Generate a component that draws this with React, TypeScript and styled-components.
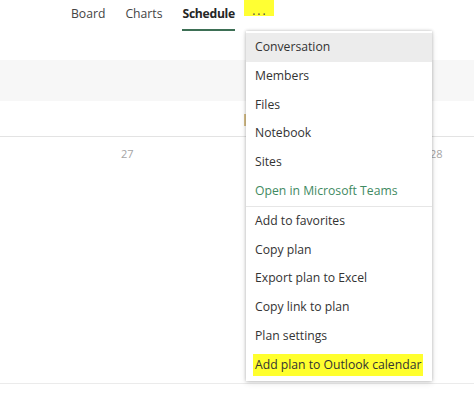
import React from 'react';
import styled, { createGlobalStyle } from 'styled-components';

const GlobalStyle = createGlobalStyle`
  html, body {
    margin: 0;
    padding: 0;
    background: #ffffff;
  }
  body {
    font-family: 'Open Sans', 'Noto Sans', sans-serif;
  }
`;

const Page = styled.div`
  position: relative;
  width: 474px;
  height: 393px;
  overflow: hidden;
  background: #ffffff;
  color: #333333;
`;

const TabBar = styled.nav`
  display: flex;
  align-items: flex-start;
  height: 32px;
  padding-left: 71px;
  gap: 20px;
`;

const Tab = styled.div<{ $active?: boolean }>`
  height: 29px;
  line-height: 28px;
  font-size: 12.2px;
  font-weight: ${(p) => (p.$active ? 700 : 400)};
  color: ${(p) => (p.$active ? '#252525' : '#444444')};
  border-bottom: 2px solid ${(p) => (p.$active ? '#3d6f55' : 'transparent')};
  letter-spacing: ${(p) => (p.$active ? '-0.3px' : '0')};
`;

const More = styled.div`
  margin-left: -11px;
  height: 16px;
  width: 30px;
  background: #ffff33;
  color: #444444;
  font-size: 12px;
  line-height: 30px;
  letter-spacing: 2px;
  text-indent: 2px;
  text-align: center;
  overflow: visible;
`;

const Band = styled.div`
  margin-top: 28px;
  height: 41px;
  background: #f7f7f7;
`;

const Gap = styled.div`
  position: relative;
  height: 35px;
  border-bottom: 1px solid #e3e3e3;
`;

const Marker = styled.span`
  position: absolute;
  left: 244px;
  top: 13px;
  width: 2px;
  height: 12px;
  background: #d8c08a;
`;

const Days = styled.div`
  display: grid;
  grid-template-columns: 254px 220px;
  padding-top: 9px;
  font-size: 11px;
  color: #a5a5a5;
  height: 237px;
  border-bottom: 1px solid #ebebeb;
`;

const Day = styled.div<{ $pad: number }>`
  padding-left: ${(p) => p.$pad}px;
`;

const Menu = styled.ul`
  position: absolute;
  left: 246px;
  top: 31px;
  width: 186px;
  margin: 0;
  padding: 2px 0 1px;
  list-style: none;
  background: #ffffff;
  box-shadow: 0 0 3px rgba(0, 0, 0, 0.25), 0 2px 6px rgba(0, 0, 0, 0.12);
`;

const Item = styled.li<{ $hover?: boolean; $green?: boolean }>`
  height: 28.8px;
  line-height: 28.8px;
  padding-left: 9px;
  font-size: 12.2px;
  white-space: nowrap;
  color: ${(p) => (p.$green ? '#3f8a62' : '#333333')};
  background: ${(p) => (p.$hover ? '#ececec' : 'transparent')};
`;

const Separator = styled.li`
  height: 1px;
  background: #e6e6e6;
`;

const Mark = styled.span`
  background: #ffff2e;
  padding: 2px 2px 3px;
  margin-left: -2px;
`;

const topItems = ['Members', 'Files', 'Notebook', 'Sites'];
const bottomItems = ['Add to favorites', 'Copy plan', 'Export plan to Excel', 'Copy link to plan', 'Plan settings'];

export default function App() {
  return (
    <>
      <GlobalStyle />
      <Page>
        <TabBar>
          <Tab>Board</Tab>
          <Tab>Charts</Tab>
          <Tab $active>Schedule</Tab>
          <More>···</More>
        </TabBar>
        <Band />
        <Gap>
          <Marker />
        </Gap>
        <Days>
          <Day $pad={121}>27</Day>
          <Day $pad={176}>28</Day>
        </Days>
        <Menu>
          <Item $hover>Conversation</Item>
          {topItems.map((label) => (
            <Item key={label}>{label}</Item>
          ))}
          <Item $green>Open in Microsoft Teams</Item>
          <Separator />
          {bottomItems.map((label) => (
            <Item key={label}>{label}</Item>
          ))}
          <Item>
            <Mark>Add plan to Outlook calendar</Mark>
          </Item>
        </Menu>
      </Page>
    </>
  );
}
